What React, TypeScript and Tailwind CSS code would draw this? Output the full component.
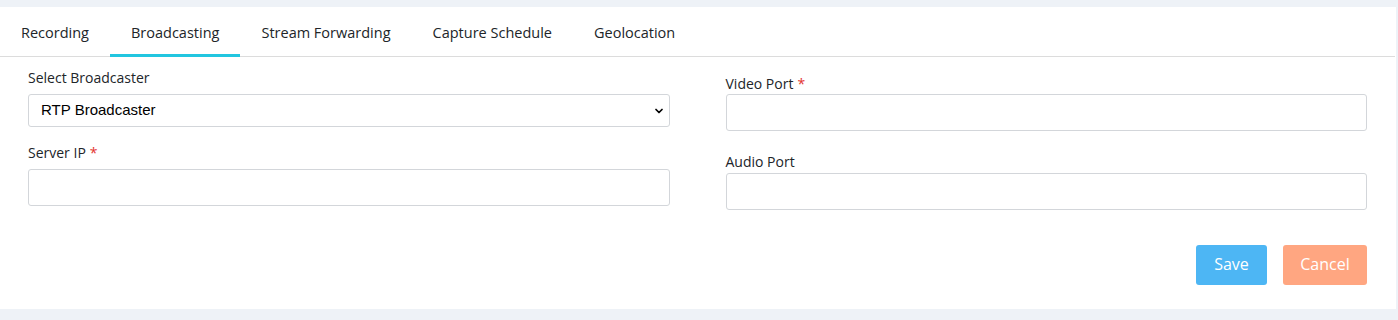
import { ChevronDown } from "lucide-react";

const tabs = ["Recording", "Broadcasting", "Stream Forwarding", "Capture Schedule", "Geolocation"];

function Field({
  label,
  required,
  className = "",
  gap = "mb-[6px]",
}: {
  label: string;
  required?: boolean;
  className?: string;
  gap?: string;
}) {
  return (
    <div className={className}>
      <label className={`block text-[14px] leading-[20px] text-[#212529] ${gap}`}>
        {label}
        {required && <span className="text-[#e3342f] ml-[4px]">*</span>}
      </label>
      <input className="block w-full h-[37px] border border-[#d3d6da] rounded-[3px] bg-white outline-none" />
    </div>
  );
}

export default function App() {
  return (
    <div className="h-[320px] bg-[#eef2f7] pt-[7px] pb-[11px] pr-[2px] font-['Open_Sans',sans-serif]">
      <div className="bg-white h-full">
        <div className="flex border-b border-[#dcdcdc] mr-[1px] h-[50px]">
          {tabs.map((t) => (
            <div
              key={t}
              className={`px-[21px] flex items-center text-[14.5px] text-[#212529] border-b-[3px] mb-[-1px] pt-[5px] ${
                t === "Broadcasting" ? "border-[#22c6e0]" : "border-transparent"
              }`}
            >
              {t}
            </div>
          ))}
        </div>

        <div className="grid grid-cols-2 gap-x-[56px] pl-[28px] pr-[29px]">
          <div>
            <div className="pt-[11px]">
              <label className="block text-[14px] leading-[20px] text-[#212529] mb-[6px]">Select Broadcaster</label>
              <div className="relative h-[33px] border border-[#d3d6da] rounded-[3px] flex items-center pl-[12px] text-[15px] text-black font-['Liberation_Sans',sans-serif]">
                RTP Broadcaster
                <ChevronDown className="absolute right-[4px] top-[10px] w-[12px] h-[12px]" strokeWidth={3.5} />
              </div>
            </div>
            <Field label="Server IP" required className="pt-[16px]" />
          </div>
          <div>
            <Field label="Video Port" required className="pt-[17px]" gap="mb-0" />
            <Field label="Audio Port" className="pt-[21px]" gap="mb-[1px]" />
          </div>
        </div>

        <div className="flex justify-end gap-[16px] pr-[29px] pt-[35px]">
          <button className="w-[71px] h-[40px] rounded-[3px] bg-[#4db6f4] text-white text-[16px] pb-[2px]">Save</button>
          <button className="w-[84px] h-[40px] rounded-[3px] bg-[#ffa681] text-white text-[16px] pb-[2px]">Cancel</button>
        </div>
      </div>
    </div>
  );
}
